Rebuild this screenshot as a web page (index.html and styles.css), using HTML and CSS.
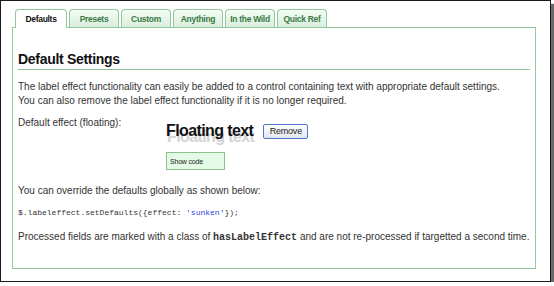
FILE: index.html
```html
<!DOCTYPE html>
<html lang="en">

<head>
    <meta charset="UTF-8">
    <title>Label Effect - Defaults</title>
    <link rel="stylesheet" href="styles.css">
</head>

<body>
    <div class="shot">
        <ul class="tabs">
            <li class="tab active">Defaults</li>
            <li class="tab">Presets</li>
            <li class="tab">Custom</li>
            <li class="tab">Anything</li>
            <li class="tab">In the Wild</li>
            <li class="tab">Quick Ref</li>
        </ul>

        <div class="panel">
            <h2>Default Settings</h2>
            <p class="intro">The label effect functionality can easily be added to a control containing text with appropriate default settings.<br>
                You can also remove the label effect functionality if it is no longer required.</p>

            <div class="demo">
                <span class="demo-label">Default effect (floating):</span>
                <div class="demo-body">
                    <div class="demo-row">
                        <span class="floating">Floating text<span class="floating-shadow">Floating text</span></span>
                        <button class="remove-btn">Remove</button>
                    </div>
                    <button class="show-code">Show code</button>
                </div>
            </div>

            <p class="before-code">You can override the defaults globally as shown below:</p>
            <pre class="code">$.labeleffect.setDefaults({effect: <span class="str">'sunken'</span>});</pre>
            <p>Processed fields are marked with a class of <code>hasLabelEffect</code> and are not re-processed if targetted a second time.</p>
        </div>
    </div>
</body>

</html>
```

FILE: styles.css
```css
:root {
    --green-border: #93c79c;
    --tab-text: #3b7a45;
}

body {
    margin: 0;
    background: #fff;
    font-family: "Liberation Sans", Arial, sans-serif;
    color: #333;
}

.shot {
    width: 551px;
    height: 282px;
    box-sizing: border-box;
    border: 1px solid #1a1a1a;
    box-shadow: 3px 4px 1px #6a6a6a;
    padding: 7px 0 0 11px;
}

.tabs {
    list-style: none;
    margin: 0 0 0 3px;
    padding: 0;
    display: flex;
    gap: 2px;
    position: relative;
    z-index: 1;
}

.tab {
    width: 50px;
    height: 18px;
    box-sizing: border-box;
    border: 1px solid var(--green-border);
    border-bottom: none;
    border-radius: 4px 4px 0 0;
    background: linear-gradient(#f4fcf5, #d8efdc);
    color: var(--tab-text);
    font-size: 8.5px;
    font-weight: bold;
    letter-spacing: -0.3px;
    text-align: center;
    line-height: 19px;
    margin-top: 1px;
}

.tab.active {
    background: #fff;
    color: #111;
    height: 19px;
    width: 52px;
}

.panel {
    width: 524px;
    height: 242px;
    box-sizing: border-box;
    border: 1px solid var(--green-border);
    margin-top: -1px;
    padding: 23px 5px 0 5px;
    font-size: 10px;
}

h2 {
    margin: 0 0 10px;
    font-size: 14px;
    letter-spacing: -0.3px;
    color: #111;
    border-bottom: 1px solid #8fbf97;
    padding-bottom: 2px;
}

p {
    margin: 0 0 10px;
    line-height: 14px;
}

.intro {
    margin-bottom: 8px;
}

.before-code {
    margin-bottom: 9px;
}

.demo {
    display: flex;
    margin-bottom: 14px;
}

.demo-label {
    width: 148px;
    flex: none;
    line-height: 14px;
}

.demo-body {
    display: flex;
    flex-direction: column;
    align-items: flex-start;
    gap: 12px;
}

.demo-row {
    display: flex;
    align-items: center;
    gap: 10px;
    margin-top: 6px;
}

.floating {
    position: relative;
    font-size: 16px;
    font-weight: bold;
    letter-spacing: -0.6px;
    color: #111;
    white-space: nowrap;
}

.floating-shadow {
    position: absolute;
    left: 1px;
    top: 6px;
    color: #d4d4d4;
    z-index: -1;
    white-space: nowrap;
}

.remove-btn {
    height: 15px;
    width: 45px;
    padding: 0;
    border: 1px solid #4f77c4;
    border-radius: 2px;
    background: linear-gradient(#ffffff, #e3e6ee);
    font-family: "Liberation Sans", Arial, sans-serif;
    font-size: 9px;
    letter-spacing: -0.2px;
    color: #222;
}

.show-code {
    width: 59px;
    height: 18px;
    padding: 0 0 0 3px;
    text-align: left;
    border: 1px solid #8cc08f;
    background: #e3fbe6;
    font-family: "Liberation Sans", Arial, sans-serif;
    font-size: 7px;
    letter-spacing: -0.2px;
    color: #222;
}

.code {
    margin: 0 0 11px;
    font-family: "Liberation Mono", "Courier New", monospace;
    font-size: 8px;
    color: #333;
    line-height: 12px;
}

.code .str {
    color: #2a3fd6;
}

code {
    font-family: "Liberation Mono", "Courier New", monospace;
    font-size: 10px;
    font-weight: bold;
    color: #333;
}
```
